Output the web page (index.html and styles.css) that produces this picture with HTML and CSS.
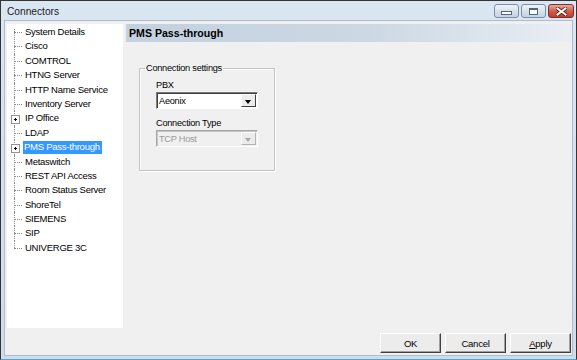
FILE: index.html
```html
<!DOCTYPE html>
<html lang="en">
<head>
    <meta charset="UTF-8">
    <title>Connectors</title>
    <link rel="stylesheet" href="styles.css">
</head>
<body>
    <div class="window">
        <div class="titlebar">
            <span class="title">Connectors</span>
            <div class="caption-buttons">
                <button class="cap-btn"><span class="min-glyph"></span></button>
                <button class="cap-btn"><span class="max-glyph"></span></button>
                <button class="cap-btn close">
                    <svg width="11" height="9" viewBox="0 0 11 9">
                        <path d="M1.5 1.5 L9.5 7.5 M9.5 1.5 L1.5 7.5" stroke="#5a1a14" stroke-width="3.6" stroke-linecap="square"/>
                        <path d="M1.5 1.5 L9.5 7.5 M9.5 1.5 L1.5 7.5" stroke="#fff" stroke-width="2" stroke-linecap="square"/>
                    </svg>
                </button>
            </div>
        </div>

        <div class="client">
            <div class="main">
                <ul class="tree">
                    <li>System Details</li>
                    <li>Cisco</li>
                    <li>COMTROL</li>
                    <li>HTNG Server</li>
                    <li>HTTP Name Service</li>
                    <li>Inventory Server</li>
                    <li class="has-kids">IP Office</li>
                    <li>LDAP</li>
                    <li class="has-kids"><span class="selected">PMS Pass-through</span></li>
                    <li>Metaswitch</li>
                    <li>REST API Access</li>
                    <li>Room Status Server</li>
                    <li>ShoreTel</li>
                    <li>SIEMENS</li>
                    <li>SIP</li>
                    <li>UNIVERGE 3C</li>
                </ul>

                <div class="content">
                    <div class="page-header">PMS Pass-through</div>
                    <fieldset class="group">
                        <legend>Connection settings</legend>
                        <div class="group-body">
                            <label class="field-label first">PBX</label>
                            <div class="combo">
                                <span class="combo-value">Aeonix</span>
                                <span class="combo-btn"></span>
                            </div>
                            <label class="field-label">Connection Type</label>
                            <div class="combo disabled">
                                <span class="combo-value">TCP Host</span>
                                <span class="combo-btn"></span>
                            </div>
                        </div>
                    </fieldset>
                </div>
            </div>

            <div class="footer">
                <button class="btn">OK</button>
                <button class="btn">Cancel</button>
                <button class="btn"><u>A</u>pply</button>
            </div>
        </div>
    </div>
</body>
</html>
```

FILE: styles.css
```css
* {
    margin: 0;
    padding: 0;
    box-sizing: border-box;
}

body {
    font-family: 'Liberation Sans', Arial, sans-serif;
    font-size: 9.5px;
    letter-spacing: -0.25px;
    color: #000;
    background: #fff;
}

.window {
    width: 577px;
    height: 360px;
    display: flex;
    flex-direction: column;
    border: 1px solid #343434;
    border-bottom-color: #4aa8dc;
    background: linear-gradient(#dbe6f3, #cfdcec);
}

.titlebar {
    height: 19px;
    display: flex;
    align-items: flex-start;
    justify-content: space-between;
    padding-left: 6px;
}

.title {
    font-size: 10.2px;
    letter-spacing: 0;
    line-height: 21px;
    color: #1a1a1a;
}

.caption-buttons {
    display: flex;
    gap: 2px;
    padding: 3px 2px 0 0;
}

.cap-btn {
    width: 25px;
    height: 14px;
    border: 1px solid #7c8ea6;
    border-radius: 3px;
    background: linear-gradient(#f1f5fa, #d6e1ee 50%, #c4d3e5);
    display: flex;
    align-items: center;
    justify-content: center;
}

.cap-btn.close {
    width: 26px;
    border-color: #7d2f2c;
    background: linear-gradient(#e9a99c, #d0604d 50%, #c13b2b);
}

.min-glyph {
    width: 11px;
    height: 4px;
    border: 1px solid #54647a;
    background: #fff;
    margin-top: 3px;
}

.max-glyph {
    width: 9px;
    height: 7px;
    border: 1px solid #54647a;
    border-top-width: 2px;
    background: #fff;
}

.client {
    flex: 1;
    margin: 0 3px 3px 3px;
    background: #f0f0f0;
    border: 1px solid #aebdcd;
    display: flex;
    flex-direction: column;
    padding: 3px 0 0 2px;
}

.main {
    display: flex;
    height: 304px;
}

.tree {
    list-style: none;
    width: 116px;
    background: #fff;
    padding-top: 1px;
}

.tree li {
    position: relative;
    height: 14.4px;
    line-height: 14.4px;
    padding-left: 18px;
    white-space: nowrap;
}

/* horizontal connector */
.tree li::before {
    content: '';
    position: absolute;
    left: 7px;
    top: 7px;
    width: 8px;
    border-top: 1px dotted #8c8c8c;
}

/* vertical connector */
.tree li::after {
    content: '';
    position: absolute;
    left: 7px;
    top: 0;
    height: 100%;
    border-left: 1px dotted #8c8c8c;
}

.tree li:first-child::after {
    top: 4px;
    height: 11px;
}

.tree li:last-child::after {
    height: 7px;
}

/* expand box */
.tree li.has-kids::before {
    left: 4px;
    top: 4px;
    width: 7px;
    height: 7px;
    border: 1px solid #939393;
    background:
        linear-gradient(#000, #000) center / 3px 1px no-repeat,
        linear-gradient(#000, #000) center / 1px 3px no-repeat,
        #fff;
    z-index: 2;
}

.tree li.has-kids::after {
    z-index: 1;
}

.selected {
    display: inline-block;
    margin-left: -2px;
    padding: 0 2px 0 1px;
    line-height: 12.5px;
    background: #3399ff;
    color: #fff;
}

.content {
    flex: 1;
    margin-left: 3px;
}

.page-header {
    height: 18px;
    line-height: 18px;
    padding-left: 3px;
    background: linear-gradient(90deg, #c3d1df, #ccd8e4 55%, #e9eef3);
    font-weight: bold;
    font-size: 10.6px;
    letter-spacing: 0;
}

.group {
    width: 136px;
    height: 109px;
    margin: 20px 0 0 13px;
    border: 1px solid #c3c3c3;
    padding: 0;
    box-shadow: inset 1px 1px 0 #fff, 1px 1px 0 #fff;
    font-size: 9.2px;
}

.group legend {
    padding: 0 1px;
    margin-left: 5px;
    line-height: 12px;
}

.group-body {
    padding-left: 16px;
}

.field-label {
    display: block;
    margin-top: 8px;
    line-height: 12px;
}

.field-label.first {
    margin-top: 5px;
}

.combo {
    width: 102px;
    height: 17px;
    margin-top: 1px;
    display: flex;
    background: #fff;
    border: 1px solid;
    border-color: #7a7a7a #fff #fff #7a7a7a;
    box-shadow: inset 1px 1px 0 #404040;
}

.combo-value {
    flex: 1;
    padding: 2px 0 0 2px;
    line-height: 12px;
}

.combo-btn {
    width: 15px;
    margin: 1px 1px 1px 0;
    background: #ececec;
    border: 1px solid;
    border-color: #fff #404040 #404040 #fff;
    position: relative;
}

.combo-btn::after {
    content: '';
    position: absolute;
    left: 3px;
    top: 5px;
    border-left: 3.5px solid transparent;
    border-right: 3.5px solid transparent;
    border-top: 4px solid #000;
}

.combo.disabled {
    background: #f0f0f0;
    border-color: #a8a8a8 #fff #fff #a8a8a8;
    box-shadow: inset 1px 1px 0 #c4c4c4;
    color: #9a9a9a;
}

.combo.disabled .combo-btn {
    border-color: #fff #b4b4b4 #b4b4b4 #fff;
}

.combo.disabled .combo-btn::after {
    border-top-color: #a8a8a8;
}

.footer {
    display: flex;
    justify-content: flex-end;
    gap: 4px;
    padding: 5px 1px 0 0;
}

.btn {
    width: 61px;
    height: 20px;
    font-family: 'Liberation Sans', Arial, sans-serif;
    font-size: 9.5px;
    letter-spacing: -0.25px;
    background: #ececec;
    border: 1px solid;
    border-color: #fff #404040 #404040 #fff;
    box-shadow: inset -1px -1px 0 #a0a0a0;
    color: #000;
}
```
